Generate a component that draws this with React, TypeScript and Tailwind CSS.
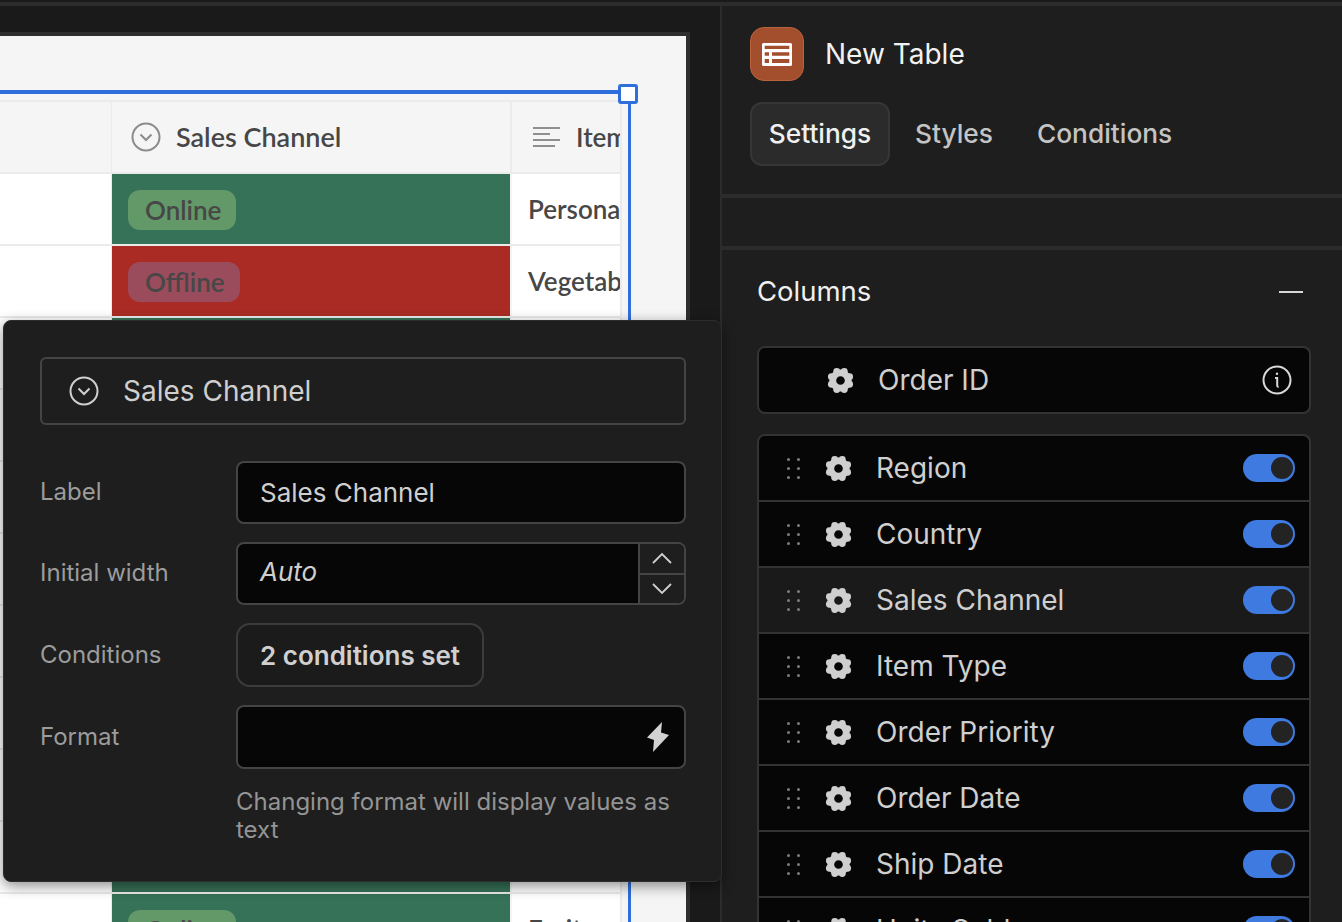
import React from 'react'

const inter = "font-['Inter',sans-serif]"

function ChevronCircle({ className }: { className?: string }) {
  return (
    <svg viewBox="0 0 30 30" fill="none" stroke="currentColor" className={className}>
      <circle cx="15" cy="15" r="13.5" strokeWidth="2" />
      <path d="M9.5 12.5 15 18l5.5-5.5" strokeWidth="2" />
    </svg>
  )
}

const lobes = [22.5, 67.5, 112.5, 157.5, 202.5, 247.5, 292.5, 337.5].map((a) => ({
  x: 14 + 10.2 * Math.cos((a * Math.PI) / 180),
  y: 14 + 10.2 * Math.sin((a * Math.PI) / 180),
}))

function Gear() {
  return (
    <svg viewBox="0 0 28 28" className="w-[27px] h-[27px] text-[#cfcfcf]" fill="currentColor">
      <circle cx="14" cy="14" r="8" fill="none" stroke="currentColor" strokeWidth="7" />
      {lobes.map((l, i) => (
        <circle key={i} cx={l.x} cy={l.y} r="3.6" />
      ))}
    </svg>
  )
}

function DragDots() {
  return (
    <div className="grid grid-cols-2 gap-x-[8px] gap-y-[6px] w-[12px]">
      {[0, 1, 2, 3, 4, 5].map((i) => (
        <span key={i} className="w-[3px] h-[3px] rounded-full bg-[#7d7d7d]" />
      ))}
    </div>
  )
}

function Toggle() {
  return (
    <div className="ml-auto w-[52px] h-[28px] rounded-full bg-[#3f7ae0] flex items-center justify-end pr-[2px]">
      <span className="w-[22px] h-[22px] rounded-full bg-[#232323]" />
    </div>
  )
}

function TableRow({ bg, pill, pillBg, item }: { bg: string; pill?: string; pillBg?: string; item?: string }) {
  return (
    <div className="flex h-[70px] border-b-2 border-[#ebebeb] box-content">
      <div className="w-[112px] bg-white border-r border-[#ebebeb]" />
      <div className={`w-[398px] ${bg} flex items-center pl-[16px] pt-[2px]`}>
        {pill && (
          <span className={`h-[40px] pl-[17px] pr-[15px] rounded-[12px] ${pillBg} flex items-center text-[26px] font-semibold text-[#474747]`}>{pill}</span>
        )}
      </div>
      <div className="w-[108px] ml-[2px] bg-white flex items-center pl-[16px] overflow-hidden whitespace-nowrap text-[26px] font-semibold text-[#474747]">{item}</div>
    </div>
  )
}

const green = 'bg-[#367257]'
const greenPill = 'bg-[#639869]'
const red = 'bg-[#aa2a24]'
const redPill = 'bg-[#9b4c5c]'

// the rows in the middle sit behind the popover, only their fill shows
const rows = [
  { bg: green, pill: 'Online', pillBg: greenPill, item: 'Personal Care' },
  { bg: red, pill: 'Offline', pillBg: redPill, item: 'Vegetables' },
  { bg: green },
  { bg: red },
  { bg: green },
  { bg: red },
  { bg: green },
  { bg: red },
  { bg: green },
  { bg: green },
  { bg: green, pill: 'Online', pillBg: greenPill, item: 'Fruits' },
]

const columns = ['Region', 'Country', 'Sales Channel', 'Item Type', 'Order Priority', 'Order Date', 'Ship Date', 'Units Sold']

function FieldRow({ label, children }: { label: string; children: React.ReactNode }) {
  return (
    <div className="flex items-center">
      <div className="w-[196px] -mt-[1px] text-[24px] text-[#9c9c9c]">{label}</div>
      {children}
    </div>
  )
}

export default function App() {
  return (
    <div className={`relative w-[1342px] h-[922px] overflow-hidden bg-[#1a1a1a] ${inter}`}>
      <div className="h-[6px] border-b-4 border-[#2c2c2c]" />
      <div className="flex h-[916px]">
        {/* canvas */}
        <div className="w-[720px] shrink-0 pt-[26px] overflow-hidden">
          <div className="relative w-[690px] h-[900px] border-t-4 border-r-4 border-[#2e2e2e] bg-[#f5f5f5] pt-[64px] font-['Lato',sans-serif]">
            <div className="w-[622px] overflow-hidden border-t-2 border-r-2 border-[#ebebeb]">
              <div className="flex h-[70px] border-b-2 border-[#ebebeb] box-content">
                <div className="w-[112px] border-r border-[#ebebeb]" />
                <div className="w-[398px] flex items-center pl-[19px] gap-[15px] text-[27px] font-semibold text-[#474747]">
                  <ChevronCircle className="w-[30px] h-[30px] text-[#8c8c8c]" />
                  Sales Channel
                </div>
                <div className="w-[110px] border-l-2 border-[#ebebeb] flex items-center pl-[21px] gap-[16px] overflow-hidden whitespace-nowrap text-[26px] font-semibold text-[#474747]">
                  <svg viewBox="0 0 27 20" className="w-[27px] h-[20px] shrink-0" stroke="#8f8f8f" strokeWidth="2">
                    <path d="M0 1h27M0 7h17M0 13h27M0 19h22" />
                  </svg>
                  Item Type
                </div>
              </div>
              {rows.map((r, i) => (
                <TableRow key={i} {...r} />
              ))}
            </div>
            {/* selection frame */}
            <div className="absolute left-0 top-[54px] w-[628px] h-[4px] bg-[#2f6fdb]" />
            <div className="absolute left-[628px] top-[54px] w-[3px] h-[900px] bg-[#2f6fdb]" />
            <div className="absolute left-[618px] top-[48px] w-[20px] h-[20px] rounded-[3px] border-[3px] border-[#2f6fdb] bg-white" />
          </div>
        </div>

        {/* right panel */}
        <div className="flex-1 border-l-2 border-[#2c2c2c] bg-[#1e1e1e]">
          <div className="pl-[28px] pt-[21px] h-[192px] border-b-4 border-[#2c2c2c]">
            <div className="flex items-center gap-[21px]">
              <div className="w-[54px] h-[54px] rounded-[14px] bg-[#a34e2d] border border-[#b9623f] flex items-center justify-center">
                <svg viewBox="0 0 30 23" className="w-[30px] h-[23px]">
                  <path
                    fill="#fff"
                    fillRule="evenodd"
                    d="M1.5 0h27A1.5 1.5 0 0 1 30 1.5v20a1.5 1.5 0 0 1-1.5 1.5h-27A1.5 1.5 0 0 1 0 21.5v-20A1.5 1.5 0 0 1 1.5 0zM2.7 2.7V6h24.6V2.7zM2.7 9.3v3.4H7V9.3zm7.3 0v3.4h17.3V9.3zM2.7 16v4H7v-4zm7.3 0v4h17.3v-4z"
                  />
                </svg>
              </div>
              <span className="text-[28px] text-[#f2f2f2]">New Table</span>
            </div>
            <div className="flex items-center mt-[21px] text-[26.3px] font-medium text-[#c4c4c4]">
              <div className="w-[140px] h-[64px] rounded-[12px] bg-[#2b2b2b] border-2 border-[#363636] flex items-center justify-center text-[#f0f0f0]">Settings</div>
              <span className="ml-[25px]">Styles</span>
              <span className="ml-[44px]">Conditions</span>
            </div>
          </div>
          <div className="h-[52px] border-b-4 border-[#2c2c2c]" />
          <div className="pl-[35px] pr-[32px] pt-[25px]">
            <div className="flex items-center justify-between h-[34px]">
              <span className="text-[27.5px] text-[#f0f0f0]">Columns</span>
              <span className="w-[24px] h-[2px] bg-[#d8d8d8] mr-[8px]" />
            </div>
            <div className="mt-[37px] w-[554px] h-[68px] rounded-[8px] bg-[#060606] border-2 border-[#333] flex items-center pl-[68px] pr-[17px] text-[28px] text-[#cfcfcf]">
              <Gear />
              <span className="ml-[24px]">Order ID</span>
              <svg viewBox="0 0 30 30" fill="none" stroke="#d8d8d8" strokeWidth="2" className="ml-auto w-[30px] h-[30px]">
                <circle cx="15" cy="15" r="13.5" />
                <path d="M13 13h2.2v7.5c0 1 .6 1.5 1.5 1.3" />
                <circle cx="15" cy="8.8" r="1.2" fill="#d8d8d8" stroke="none" />
              </svg>
            </div>
            <div className="mt-[20px] w-[554px] rounded-t-[8px] overflow-hidden bg-[#060606] border-2 border-[#333] border-b-0">
              {columns.map((c) => (
                <div key={c} className={`h-[66px] flex items-center pl-[28px] pr-[14px] text-[28px] text-[#cfcfcf] border-b-2 border-[#333] ${c === 'Sales Channel' ? 'bg-[#1a1a1a]' : ''}`}>
                  <DragDots />
                  <span className="ml-[26px]"><Gear /></span>
                  <span className="ml-[24px]">{c}</span>
                  <Toggle />
                </div>
              ))}
            </div>
          </div>
        </div>
      </div>

      {/* column popover */}
      <div className="absolute left-[3px] top-[320px] w-[719px] h-[562px] rounded-[8px] bg-[#1e1e1e] border border-[#2e2e2e] shadow-[0_4px_14px_rgba(0,0,0,0.45)] pl-[36px] pr-[35px] pt-[36px]">
        <div className="h-[68px] rounded-[6px] border-2 border-[#444] flex items-center pl-[27px] gap-[24px] text-[28px] text-[#cfcfcf]">
          <ChevronCircle className="w-[30px] h-[30px] text-[#d0d0d0]" />
          Sales Channel
        </div>
        <div className="mt-[36px] flex flex-col gap-[18px]">
          <FieldRow label="Label">
            <div className="w-[450px] h-[63px] rounded-[8px] bg-[#060606] border-2 border-[#444] flex items-center pl-[22px] text-[26px] text-[#cfcfcf]">Sales Channel</div>
          </FieldRow>
          <FieldRow label="Initial width">
            <div className="w-[450px] h-[63px] rounded-[8px] bg-[#060606] border-2 border-[#444] flex overflow-hidden">
              <div className="flex-1 flex items-center pl-[22px] pb-[4px] text-[26px] italic text-[#cfcfcf]">Auto</div>
              <div className="w-[46px] border-l-2 border-[#444] bg-[#1e1e1e] flex flex-col">
                <div className="flex-1 flex items-center justify-center border-b-2 border-[#444]">
                  <svg viewBox="0 0 20 12" className="w-[20px] h-[12px]" fill="none" stroke="#cfcfcf" strokeWidth="1.8"><path d="M1 11 10 2l9 9" /></svg>
                </div>
                <div className="flex-1 flex items-center justify-center">
                  <svg viewBox="0 0 20 12" className="w-[20px] h-[12px]" fill="none" stroke="#cfcfcf" strokeWidth="1.8"><path d="M1 1l9 9 9-9" /></svg>
                </div>
              </div>
            </div>
          </FieldRow>
          <FieldRow label="Conditions">
            <div className="w-[248px] h-[64px] rounded-[14px] bg-[#1b1b1b] border-2 border-[#3c3c3c] flex items-center pl-[22px] text-[26px] font-semibold text-[#d0d0d0]">2 conditions set</div>
          </FieldRow>
          <FieldRow label="Format">
            <div className="w-[450px] h-[64px] rounded-[8px] bg-[#060606] border-2 border-[#444] flex items-center justify-end pr-[15px]">
              <svg viewBox="0 0 22 30" className="w-[22px] h-[30px]" fill="#d2d2d2"><path d="M15 0 0 15.5l7 2.5L6 30l16-17-8-2.5z" /></svg>
            </div>
          </FieldRow>
        </div>
        <p className="ml-[196px] mt-[19px] text-[24px] leading-[28px] text-[#949494]">Changing format will display values as text</p>
      </div>
    </div>
  )
}
